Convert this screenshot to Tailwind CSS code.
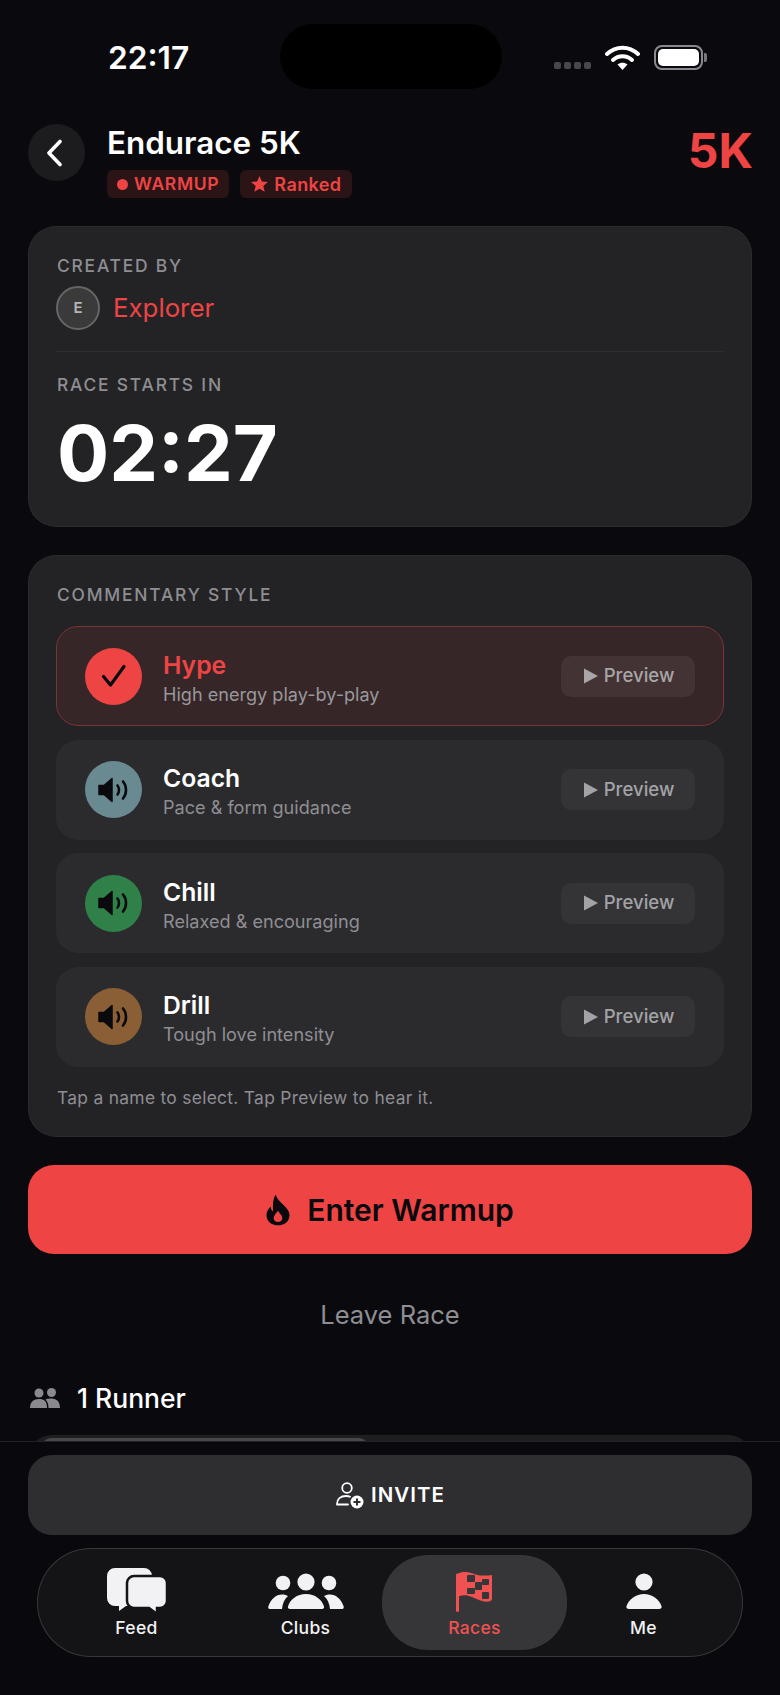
<!DOCTYPE html>
<html>
<head>
<meta charset="utf-8">
<script src="https://cdn.jsdelivr.net/npm/@tailwindcss/browser@4"></script>
</head>
<body class="m-0">
<div class="relative w-[780px] h-[1695px] overflow-hidden bg-[#0a0a0e] text-white font-['Inter',sans-serif]">
  <!-- status bar -->
  <div class="relative h-[124px]">
    <span class="absolute left-[108px] top-[39px] text-[31.700px] leading-[38px] font-semibold">22:17</span>
    <div class="absolute left-[280px] top-[24px] w-[222px] h-[65px] rounded-full bg-black"></div>
    <div class="absolute left-[554px] top-[62px] flex gap-[3px]">
      <i class="block w-[7px] h-[7px] rounded-[2px] bg-[#48484a]"></i><i class="block w-[7px] h-[7px] rounded-[2px] bg-[#48484a]"></i><i class="block w-[7px] h-[7px] rounded-[2px] bg-[#48484a]"></i><i class="block w-[7px] h-[7px] rounded-[2px] bg-[#48484a]"></i>
    </div>
    <svg class="absolute left-[605px] top-[45px]" width="35" height="25" viewBox="0 0 35 25" fill="none"><path d="M2 9C11 0.5 24 0.5 33 9" stroke="#fff" stroke-width="4" stroke-linecap="round"/><path d="M8 15C13.500 10 21.500 10 27 15" stroke="#fff" stroke-width="4" stroke-linecap="round"/><path d="M12.500 19.500C15.500 17 19.500 17 22.500 19.500L17.500 25Z" fill="#fff"/></svg>
    <div class="absolute left-[654px] top-[45px] flex items-center">
      <div class="w-[49px] h-[25px] rounded-[8px] border-2 border-[#8a8a8e] p-[2px]"><div class="w-full h-full rounded-[5px] bg-white"></div></div>
      <div class="ml-[1px] w-[3px] h-[9px] rounded-r-[2px] bg-[#77777a]"></div>
    </div>
  </div>

  <main class="px-[28px]">
    <!-- header -->
    <header class="flex items-start h-[74px]">
      <button class="w-[57px] h-[57px] rounded-full bg-[#1c1c1f] flex items-center justify-center shrink-0 pr-[4px]">
        <svg width="20" height="28" viewBox="0 0 20 28" fill="none"><path d="M15 2.500L4 14L15 25.500" stroke="#fff" stroke-width="3.600" stroke-linecap="round" stroke-linejoin="round"/></svg>
      </button>
      <div class="ml-[22px] flex-1">
        <h1 class="text-[31.400px] leading-[36px] font-semibold mt-[1px]">Endurace 5K</h1>
        <div class="mt-[9px] flex gap-[11px]">
          <span class="h-[28px] px-[10px] rounded-[6px] bg-[#2a1416] flex items-center gap-[6px] text-[#ef4444] text-[17.500px] font-semibold tracking-[0.7px]"><i class="block w-[11px] h-[11px] rounded-full bg-[#ef4444]"></i>WARMUP</span>
          <span class="h-[28px] px-[11px] rounded-[6px] bg-[#2a1416] flex items-center gap-[6px] text-[#ef4444] text-[18px] font-semibold tracking-[0.4px]"><svg width="17" height="16" viewBox="0 0 24 23" fill="#ef4444"><path d="M12 0l3.400 7.800 8.600.8-6.500 5.600 2 8.400L12 18.200 4.500 22.600l2-8.400L0 8.600l8.600-.8z"/></svg>Ranked</span>
        </div>
      </div>
      <div class="text-[#ef4444] text-[48px] leading-[56px] font-bold mt-[-1px] -mr-[1px]">5K</div>
    </header>

    <!-- race card -->
    <section class="mt-[28px] h-[301px] rounded-[28px] bg-[#232326] border border-white/[0.04] px-[27px] pt-[29px]">
      <div class="ml-[1px] text-[17.400px] leading-[20px] font-medium tracking-[1.800px] text-[#8e8e93]">CREATED BY</div>
      <div class="mt-[10px] flex items-center gap-[13px]">
        <div class="w-[44px] h-[44px] rounded-full bg-[#3a3a3a] border-2 border-[#666668] flex items-center justify-center text-[15px] font-semibold text-[#b5b5b8]">E</div>
        <span class="text-[#ef4444] text-[25.800px] leading-[32px]">Explorer</span>
      </div>
      <div class="mt-[21px] h-px bg-white/5"></div>
      <div class="ml-[1px] mt-[23px] text-[17.400px] leading-[20px] font-medium tracking-[1.800px] text-[#8e8e93]">RACE STARTS IN</div>
      <div class="ml-[1px] mt-[14px] text-[77.500px] leading-[88px] font-bold">02:27</div>
    </section>

    <!-- commentary card -->
    <section class="mt-[28px] h-[582px] rounded-[28px] bg-[#232326] border border-white/[0.04] px-[27px] pt-[29px]">
      <div class="ml-[1px] text-[17.400px] leading-[20px] font-medium tracking-[1.800px] text-[#8e8e93]">COMMENTARY STYLE</div>
      <div class="mt-[21px] flex flex-col gap-[13.600px]">
        <div class="h-[100px] rounded-[22px] bg-[#362627] border border-[#7a3436] flex items-center pl-[28px] pr-[28px]">
          <div class="w-[57px] h-[57px] rounded-full bg-[#ef4444] flex items-center justify-center shrink-0">
            <svg width="26" height="24" viewBox="0 0 26 24" fill="none"><path d="M2.500 12.500L9.500 21L23 2.500" stroke="#0a0a0e" stroke-width="3.200" stroke-linecap="round" stroke-linejoin="round"/></svg>
          </div>
          <div class="ml-[21px] flex-1 pt-[3px]">
            <div class="text-[24.700px] leading-[30px] font-semibold text-[#ef4444]">Hype</div>
            <div class="mt-[2px] text-[18.100px] leading-[24px] text-[#98989c]">High energy play-by-play</div>
          </div>
          <button class="w-[134px] h-[41px] rounded-[10px] bg-[#433334] flex items-center justify-center gap-[6px] pl-[2px] text-[18.600px] font-medium text-[#a8a6a7]"><svg width="14" height="16" viewBox="0 0 14 16" fill="#a8a6a7"><path d="M0 0.500L14 8L0 15.500Z"/></svg>Preview</button>
        </div>

        <div class="h-[100px] rounded-[22px] bg-[#2b2b2e] flex items-center pl-[29px] pr-[29px]">
          <div class="w-[57px] h-[57px] rounded-full bg-[#6a8a92] flex items-center justify-center shrink-0">
            <svg width="32" height="28" viewBox="0 0 32 28" fill="none"><path d="M1 9.500h5L14 2.500v23L6 18.500H1Z" fill="#0a0a0e" stroke="#0a0a0e" stroke-width="1.500" stroke-linejoin="round"/><path d="M19.500 9.500C21.500 12 21.500 16 19.500 18.500" stroke="#0a0a0e" stroke-width="2.600" stroke-linecap="round"/><path d="M25 5.500C29 10 29 18 25 22.500" stroke="#0a0a0e" stroke-width="2.600" stroke-linecap="round"/></svg>
          </div>
          <div class="ml-[21px] flex-1 pt-[3px]">
            <div class="text-[24.700px] leading-[30px] font-semibold">Coach</div>
            <div class="mt-[2px] text-[18.100px] leading-[24px] text-[#8e8e93]">Pace &amp; form guidance</div>
          </div>
          <button class="w-[134px] h-[41px] rounded-[10px] bg-[#343437] flex items-center justify-center gap-[6px] pl-[2px] text-[18.600px] font-medium text-[#a3a3a6]"><svg width="14" height="16" viewBox="0 0 14 16" fill="#a3a3a6"><path d="M0 0.500L14 8L0 15.500Z"/></svg>Preview</button>
        </div>

        <div class="h-[100px] rounded-[22px] bg-[#2b2b2e] flex items-center pl-[29px] pr-[29px]">
          <div class="w-[57px] h-[57px] rounded-full bg-[#2f8049] flex items-center justify-center shrink-0">
            <svg width="32" height="28" viewBox="0 0 32 28" fill="none"><path d="M1 9.500h5L14 2.500v23L6 18.500H1Z" fill="#0a0a0e" stroke="#0a0a0e" stroke-width="1.500" stroke-linejoin="round"/><path d="M19.500 9.500C21.500 12 21.500 16 19.500 18.500" stroke="#0a0a0e" stroke-width="2.600" stroke-linecap="round"/><path d="M25 5.500C29 10 29 18 25 22.500" stroke="#0a0a0e" stroke-width="2.600" stroke-linecap="round"/></svg>
          </div>
          <div class="ml-[21px] flex-1 pt-[3px]">
            <div class="text-[24.700px] leading-[30px] font-semibold">Chill</div>
            <div class="mt-[2px] text-[18.100px] leading-[24px] text-[#8e8e93]">Relaxed &amp; encouraging</div>
          </div>
          <button class="w-[134px] h-[41px] rounded-[10px] bg-[#343437] flex items-center justify-center gap-[6px] pl-[2px] text-[18.600px] font-medium text-[#a3a3a6]"><svg width="14" height="16" viewBox="0 0 14 16" fill="#a3a3a6"><path d="M0 0.500L14 8L0 15.500Z"/></svg>Preview</button>
        </div>

        <div class="h-[100px] rounded-[22px] bg-[#2b2b2e] flex items-center pl-[29px] pr-[29px]">
          <div class="w-[57px] h-[57px] rounded-full bg-[#8a5f35] flex items-center justify-center shrink-0">
            <svg width="32" height="28" viewBox="0 0 32 28" fill="none"><path d="M1 9.500h5L14 2.500v23L6 18.500H1Z" fill="#0a0a0e" stroke="#0a0a0e" stroke-width="1.500" stroke-linejoin="round"/><path d="M19.500 9.500C21.500 12 21.500 16 19.500 18.500" stroke="#0a0a0e" stroke-width="2.600" stroke-linecap="round"/><path d="M25 5.500C29 10 29 18 25 22.500" stroke="#0a0a0e" stroke-width="2.600" stroke-linecap="round"/></svg>
          </div>
          <div class="ml-[21px] flex-1 pt-[3px]">
            <div class="text-[24.700px] leading-[30px] font-semibold">Drill</div>
            <div class="mt-[2px] text-[18.100px] leading-[24px] text-[#8e8e93]">Tough love intensity</div>
          </div>
          <button class="w-[134px] h-[41px] rounded-[10px] bg-[#343437] flex items-center justify-center gap-[6px] pl-[2px] text-[18.600px] font-medium text-[#a3a3a6]"><svg width="14" height="16" viewBox="0 0 14 16" fill="#a3a3a6"><path d="M0 0.500L14 8L0 15.500Z"/></svg>Preview</button>
        </div>
      </div>
      <p class="ml-[1px] mt-[19px] text-[17.400px] leading-[24px] tracking-[0.300px] text-[#8e8e93]">Tap a name to select. Tap Preview to hear it.</p>
    </section>

    <!-- actions -->
    <button class="mt-[28px] w-full h-[89px] rounded-[26px] bg-[#ef4444] flex items-center justify-center gap-[17px] pt-[1px] text-[#0a0a0e] text-[30px] font-semibold">
      <svg width="24" height="32" viewBox="0 0 25 32"><path fill-rule="evenodd" d="M10 0c1.500 4.500 4 6.500 8 10.500 4 3.800 6.500 7 6.500 11C24.500 27.500 19.500 32 12.500 32S0.500 27.500 0.500 21.500C0.500 17.500 2.500 14.500 5 12.500c.2 2.500 1 4 2.500 5C7 11 7 5 10 0ZM12.500 16.500c-1 2.500-4.500 4.500-4.500 8 0 2.500 2 4 4.500 4s4.500-1.500 4.500-4c0-3.500-3.500-5-4.500-8Z" fill="#0a0a0e"/></svg>
      Enter Warmup
    </button>
    <div class="mt-[45px] text-center text-[25.500px] leading-[32px] text-[#8e8e93]">Leave Race</div>
    <div class="mt-[51px] flex items-center gap-[17px] pl-[2px]">
      <svg width="30" height="20" viewBox="0 0 30 20" fill="#8a8a8e"><circle cx="9" cy="5" r="4.500"/><circle cx="21.500" cy="4.500" r="4.500"/><path d="M0 20c0-6 3.500-9 9-9 2.500 0 4.500.6 6 2 1.500 1.500 2 4 2 7Z"/><path d="M18.500 20c0-3.500-.8-6.500-3-8.500 1.500-.8 3.500-1 6-1 5.500 0 8.500 3.500 8.500 9.500Z"/></svg>
      <span class="text-[26.500px] leading-[32px] font-medium">1 Runner</span>
    </div>
    <div class="mt-[21px] h-[60px] rounded-t-[24px] bg-[#1e1e21] pl-[12px]">
      <div class="w-[330px] h-[12px] rounded-t-[14px] bg-[#48484a] relative top-[3px]"></div>
    </div>
  </main>

  <!-- bottom bar overlay -->
  <div class="absolute left-0 right-0 top-[1441px] bottom-0 bg-[#09090d] border-t border-white/10 px-[28px] pt-[13px]">
    <button class="w-full h-[80px] rounded-[24px] bg-[#2e2e30] flex items-center justify-center gap-[7px] text-[20.500px] font-semibold tracking-[1px] pt-[1px] pl-[1px]">
      <svg width="28" height="27" viewBox="0 0 28 27" fill="none"><circle cx="11" cy="6" r="4.800" stroke="#fff" stroke-width="1.800"/><path d="M1 22c0-5 3.500-8 9-8 1.500 0 3 .2 4 .7M1 22.500h11" stroke="#fff" stroke-width="1.800" stroke-linecap="round"/><circle cx="21" cy="20" r="6.500" fill="#fff"/><path d="M21 16.500v7M17.500 20h7" stroke="#2e2e30" stroke-width="2"/></svg>
      INVITE
    </button>
    <nav class="mt-[13px] mx-[9px] h-[109px] rounded-[54px] bg-[#141416] border border-white/15 grid grid-cols-[169px_169px_169px_169px] items-stretch px-[14px] py-[6px] text-[#f2f2f4]">
      <a class="flex flex-col items-center pt-[12px]">
        <div class="h-[48px] flex items-center">
          <svg width="60" height="47" viewBox="0 0 60 47" fill="#f2f2f4"><path d="M8 0h29a8 8 0 0 1 8 8v22a8 8 0 0 1-8 8H19l-7 5v-5H8a8 8 0 0 1-8-8V8a8 8 0 0 1 8-8Z"/><path d="M27 8h26a7 7 0 0 1 7 7v18a7 7 0 0 1-7 7h-3v6l-8-6H27a7 7 0 0 1-7-7V15a7 7 0 0 1 7-7Z" stroke="#141416" stroke-width="2.500"/></svg>
        </div>
        <span class="mt-[2px] text-[17.500px] leading-[22px] font-medium tracking-[0.3px]">Feed</span>
      </a>
      <a class="flex flex-col items-center pt-[12px]">
        <div class="h-[48px] flex items-center">
          <svg width="76" height="36" viewBox="0 0 76 36" fill="#f2f2f4"><circle cx="15" cy="10" r="7.300"/><circle cx="38" cy="9" r="8.600"/><circle cx="61" cy="10" r="7.300"/><path d="M2 36c-2 0-2-1.500-1.500-3C3 26 8 21.500 14 21.500c2.500 0 4.500.7 6 1.500-3.500 3-5.500 7.500-6 13Z"/><path d="M22 36c-1.500 0-2.500-1-2-2.500 2-7 9-12.500 18-12.500s16 5.500 18 12.500c.5 1.500-.5 2.500-2 2.500Z"/><path d="M62 36c-.5-5.500-2.500-10-6-13 1.500-.8 3.500-1.500 6-1.500 6 0 11 4.500 13.500 11.500.5 1.500.5 3-1.500 3Z"/></svg>
        </div>
        <span class="mt-[2px] text-[17.500px] leading-[22px] font-medium tracking-[0.3px]">Clubs</span>
      </a>
      <a class="flex flex-col items-center pt-[12px] -mx-[8px] rounded-[46px] bg-[#363638] text-[#f05252]">
        <div class="h-[48px] flex items-center">
          <svg width="37" height="42" viewBox="0 0 37 42"><path d="M1.500 40.500V5" stroke="#f05252" stroke-width="3" stroke-linecap="round"/><path d="M1 4C6 1 12 1.500 17 3.500c6 2.500 12 2.500 19 1.500V29c0 2-3 3-8 2.500-6-1-11-5-17-6-4-.5-8 .5-9.500 2Z" fill="#f05252"/><g fill="#363638"><rect x="11" y="5" width="8" height="7" rx="1"/><rect x="26" y="9" width="7" height="6" rx="1"/><rect x="19" y="12" width="7" height="8" rx="1"/><rect x="11" y="18" width="8" height="6" rx="1"/><rect x="26" y="22" width="7" height="7" rx="1"/></g></svg>
        </div>
        <span class="mt-[2px] text-[17.500px] leading-[22px] font-medium tracking-[0.3px]">Races</span>
      </a>
      <a class="flex flex-col items-center pt-[12px]">
        <div class="h-[48px] flex items-center">
          <svg width="36" height="36" viewBox="0 0 36 36" fill="#f2f2f4"><circle cx="18" cy="9" r="8.600"/><path d="M3 36c-2 0-3-1-2.500-3C3 26 10 21 18 21s15 5 17.500 12c.5 2-.5 3-2.500 3Z"/></svg>
        </div>
        <span class="mt-[2px] text-[17.500px] leading-[22px] font-medium tracking-[0.3px]">Me</span>
      </a>
    </nav>
  </div>
</div>
</body>
</html>
